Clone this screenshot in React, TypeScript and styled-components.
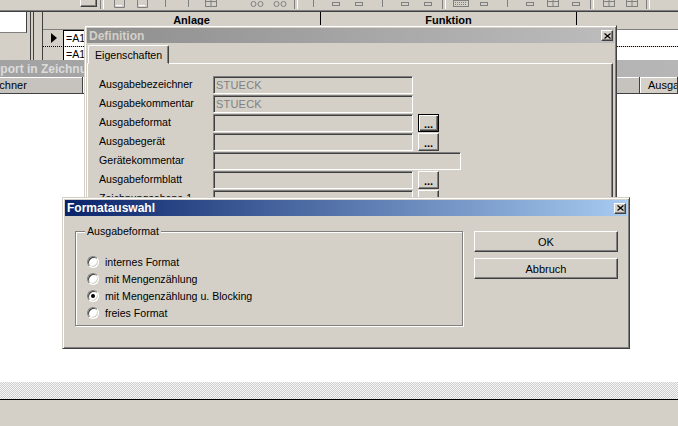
import React from 'react';
import styled, { createGlobalStyle, css } from 'styled-components';

const face = '#d4d0c8';

const GlobalStyle = createGlobalStyle`
  html, body {
    margin: 0;
    padding: 0;
    background: ${face};
  }
  body {
    font-family: "Liberation Sans", Arial, sans-serif;
    font-size: 10.6px;
    color: #000;
  }
`;

const raised = css`
  border: 1px solid;
  border-color: #fff #404040 #404040 #fff;
  box-shadow: inset -1px -1px #808080, inset 1px 1px ${face};
`;

const sunken = css`
  border: 1px solid;
  border-color: #808080 #fff #fff #808080;
  box-shadow: inset 1px 1px #404040, inset -1px -1px ${face};
`;

const Screen = styled.div`
  position: relative;
  width: 678px;
  height: 426px;
  overflow: hidden;
  display: flex;
  flex-direction: column;
  background: ${face};
`;

/* ---------- toolbar ---------- */

const Toolbar = styled.div`
  height: 10px;
  flex-shrink: 0;
  display: flex;
  align-items: flex-end;
  overflow: hidden;
  border-bottom: 1px solid #808080;
`;

const ToolCombo = styled.div`
  width: 97px;
  height: 20px;
  display: flex;
  justify-content: flex-end;
  margin-bottom: 1px;
`;

const DropButton = styled.div`
  width: 17px;
  height: 18px;
  box-sizing: border-box;
  ${raised};
`;

const ToolSep = styled.div`
  width: 2px;
  height: 14px;
  margin: 0 3px 1px;
  border-left: 1px solid #808080;
  border-right: 1px solid #fff;
`;

const ToolSlot = styled.div`
  width: 23px;
  height: 16px;
  display: flex;
  justify-content: center;
  margin-bottom: 1px;
`;

type Glyph = 'page' | 'frame' | 'bino' | 'tick' | 'kbd' | 'dash' | 'none';

const ToolGlyph = ({ glyph }: { glyph: Glyph }) => {
  const c = '#808080';
  switch (glyph) {
    case 'page':
      return (
        <svg width="16" height="16">
          <path d="M3.5 0.5h7l3 3v11h-10z" fill="none" stroke={c} />
          <path d="M5 12.5h6" stroke="#fff" />
        </svg>
      );
    case 'frame':
      return (
        <svg width="16" height="16">
          <rect x="2.5" y="2.5" width="11" height="11" fill="none" stroke={c} />
          <path d="M8 3v10M3 8.5h10" stroke={c} />
        </svg>
      );
    case 'bino':
      return (
        <svg width="16" height="16">
          <circle cx="4.5" cy="11" r="2.5" fill="none" stroke={c} />
          <circle cx="11.5" cy="11" r="2.5" fill="none" stroke={c} />
        </svg>
      );
    case 'tick':
      return (
        <svg width="16" height="16">
          <path d="M8.5 4v10" stroke={c} />
        </svg>
      );
    case 'kbd':
      return (
        <svg width="16" height="16">
          <rect x="0.5" y="7.5" width="15" height="6" fill="none" stroke={c} />
          <path d="M2 9.5h12M2 11.5h12" stroke={c} strokeDasharray="1 1" />
        </svg>
      );
    case 'dash':
      return (
        <svg width="16" height="16">
          <rect x="4.5" y="9.5" width="7" height="3" fill="none" stroke={c} />
        </svg>
      );
    default:
      return null;
  }
};

type ToolItem = Glyph | 'sep';

const toolItems: ToolItem[] = [
  'sep', 'page', 'page', 'tick', 'tick', 'frame', 'none', 'bino', 'bino', 'sep',
  'tick', 'dash', 'dash', 'tick', 'dash', 'dash', 'sep',
  'kbd', 'dash', 'tick', 'dash', 'frame', 'dash', 'sep', 'frame', 'frame', 'sep',
];

/* ---------- data grid behind ---------- */

const GridArea = styled.div`
  height: 49px;
  flex-shrink: 0;
  box-sizing: border-box;
  display: flex;
  border-top: 1px solid #404040;
`;

const TreePane = styled.div`
  width: 27px;
  display: flex;
  flex-direction: column;
`;

const TreeBox = styled.div`
  height: 20px;
  background: #fff;
  border-right: 1px solid #404040;
  border-bottom: 1px solid #808080;
`;

const Splitter = styled.div`
  width: 2px;
  margin: 0 8px 0 3px;
  border-left: 1px solid #404040;
  border-right: 1px solid #404040;
`;

const DataGrid = styled.div`
  flex: 1;
  display: flex;
  flex-direction: column;
  border-left: 1px solid #404040;
`;

const GridHeader = styled.div`
  height: 17px;
  display: flex;
  border-bottom: 1px solid #808080;
`;

const HeadCell = styled.div<{ $w?: number; $plain?: boolean }>`
  ${p => (p.$w ? `width: ${p.$w}px; flex-shrink: 0;` : 'flex: 1;')}
  box-sizing: border-box;
  border-right: ${p => (p.$plain ? 'none' : '1px solid #000')};
  font-family: "Liberation Sans", Arial, sans-serif;
  font-size: 11px;
  font-weight: bold;
  line-height: 17px;
  text-align: center;
`;

const GridRow = styled.div<{ $focused?: boolean }>`
  height: 16px;
  display: flex;
  border-bottom: 1px ${p => (p.$focused ? 'dotted #000' : 'solid #fff')};
  &:last-child {
    flex: 1;
    border-bottom: none;
  }
`;

const Indicator = styled.div`
  width: 20px;
  flex-shrink: 0;
  background: ${face};
  display: flex;
  align-items: center;
  justify-content: center;
  padding-left: 2px;
  box-sizing: border-box;
`;

const DataCell = styled.div<{ $w?: number; $active?: boolean; $plain?: boolean }>`
  ${p => (p.$w ? `width: ${p.$w}px; flex-shrink: 0;` : 'flex: 1;')}
  box-sizing: border-box;
  background: #fff;
  border-left: ${p => (p.$plain ? 'none' : '1px solid #000')};
  ${p => p.$active && 'border-top: 1px solid #000;'}
  padding-left: 2px;
  line-height: 15px;
  white-space: nowrap;
  overflow: hidden;
`;

/* ---------- report window behind ---------- */

const ReportWindow = styled.div`
  flex: 1;
  display: flex;
  flex-direction: column;
  background: #fff;
  overflow: hidden;
`;

const InactiveBar = styled.div`
  height: 17px;
  flex-shrink: 0;
  display: flex;
  align-items: center;
  background: linear-gradient(to right, #a2a2a2, #b6b6b6);
  color: #dcdcdc;
  font-size: 12px;
  font-weight: bold;
  white-space: nowrap;
`;

const ReportTitle = styled.span`
  margin-left: -15px;
`;

const ListHeader = styled.div`
  height: 17px;
  flex-shrink: 0;
  display: flex;
  border-bottom: 1px solid #fff;
`;

const ListHeadCell = styled.div<{ $w?: number; $shift?: number; $shade?: boolean; $pad?: number }>`
  ${p => (p.$w ? `width: ${p.$w}px; flex-shrink: 0;` : 'flex: 1;')}
  margin-left: ${p => p.$shift ?? 0}px;
  box-sizing: border-box;
  background: ${p => (p.$shade ? '#c6c3be' : face)};
  border-right: 1px solid #404040;
  border-bottom: 1px solid #404040;
  box-shadow: inset 1px 1px #fff;
  padding-left: ${p => p.$pad ?? 4}px;
  line-height: 16px;
  font-size: 11px;
  white-space: nowrap;
  overflow: hidden;
`;

const Dither = styled.div`
  height: 17px;
  flex-shrink: 0;
  background-color: #fff;
  background-image: repeating-conic-gradient(#cdcdcd 0 25%, #f7f7f7 0 50%);
  background-size: 2px 2px;
`;

const StatusBar = styled.div`
  height: 27px;
  flex-shrink: 0;
  box-sizing: border-box;
  border-top: 1px solid #000;
  background: ${face};
`;

/* ---------- dialog windows ---------- */

const Win = styled.div<{ $x: number; $y: number; $w: number; $h: number }>`
  position: absolute;
  left: ${p => p.$x}px;
  top: ${p => p.$y}px;
  width: ${p => p.$w}px;
  height: ${p => p.$h}px;
  box-sizing: border-box;
  padding: 2px;
  background: ${face};
  border: 1px solid;
  border-color: ${face} #404040 #404040 ${face};
  box-shadow: inset 1px 1px #fff, inset -1px -1px #808080;
  display: flex;
  flex-direction: column;
`;

const Caption = styled.div<{ $active?: boolean }>`
  height: ${p => (p.$active ? 16 : 15)}px;
  flex-shrink: 0;
  display: flex;
  align-items: center;
  justify-content: space-between;
  padding: 0 1px 0 2px;
  background: ${p =>
    p.$active
      ? 'linear-gradient(to right, #0a246a, #a6caf0)'
      : 'linear-gradient(to right, #8e8e8e, #bdbcbd)'};
  color: ${p => (p.$active ? '#fff' : '#d4d0c8')};
  font-size: 12px;
  font-weight: bold;
`;

const CloseBox = styled.div`
  width: 12px;
  height: 11px;
  box-sizing: border-box;
  background: ${face};
  ${raised};
  display: flex;
  align-items: center;
  justify-content: center;
`;

const CloseGlyph = () => (
  <svg width="7" height="6" viewBox="0 0 7 6">
    <path d="M0.5 0.5l6 5M6.5 0.5l-6 5" stroke="#000" strokeWidth="1.2" />
  </svg>
);

const TabStrip = styled.div`
  display: flex;
  margin-top: 2px;
  padding-left: 1px;
  position: relative;
  z-index: 1;
`;

const Tab = styled.div`
  height: 19px;
  box-sizing: border-box;
  padding: 0 6px;
  display: flex;
  align-items: center;
  background: ${face};
  border: 1px solid;
  border-color: #fff #404040 ${face} #fff;
  border-radius: 2px 2px 0 0;
  box-shadow: inset -1px 0 #808080;
  margin-bottom: -1px;
`;

const TabPanel = styled.div`
  flex: 1;
  margin: 0 1px 1px 0;
  padding: 12px 10px 0 11px;
  border: 1px solid;
  border-color: #fff #404040 #404040 #fff;
  box-shadow: inset -1px -1px #808080;
  display: flex;
  flex-direction: column;
  gap: 1px;
`;

const FieldRow = styled.div`
  height: 18px;
  display: flex;
  align-items: center;
`;

const FieldLabel = styled.span`
  width: 114px;
  flex-shrink: 0;
  white-space: nowrap;
  margin-top: -2px;
`;

const TextBox = styled.div<{ $w: number }>`
  width: ${p => p.$w}px;
  height: 18px;
  box-sizing: border-box;
  ${sunken};
  background: ${face};
  color: #808080;
  padding-left: 2px;
  line-height: 16px;
  font-size: 11px;
  letter-spacing: 0.2px;
`;

const DotsButton = styled.div<{ $default?: boolean }>`
  width: 21px;
  height: 18px;
  margin-left: 5px;
  box-sizing: border-box;
  background: ${face};
  display: flex;
  align-items: flex-end;
  justify-content: center;
  padding-bottom: 3px;
  font-weight: bold;
  font-size: 11px;
  line-height: 8px;
  ${p =>
    p.$default
      ? css`
          border: 1px solid #000;
          box-shadow: inset 1px 1px #fff, inset -1px -1px #404040, inset -2px -2px #808080;
        `
      : raised}
`;

const DialogBody = styled.div`
  display: flex;
  align-items: flex-start;
  gap: 11px;
  padding: 9px 8px 0 10px;
`;

const GroupBox = styled.fieldset`
  width: 388px;
  min-width: 0;
  box-sizing: border-box;
  margin: 0;
  padding: 15px 10px 4px 11px;
  border: 1px solid #808080;
  box-shadow: inset 1px 1px #fff, 1px 1px #fff;
`;

const GroupLegend = styled.legend`
  padding: 0 2px;
  margin-left: -2px;
  line-height: 13px;
  background: ${face};
`;

const RadioRow = styled.label`
  height: 17px;
  display: flex;
  align-items: center;
  gap: 6px;
`;

const RadioDot = styled.span<{ $checked?: boolean }>`
  position: relative;
  width: 12px;
  height: 12px;
  box-sizing: border-box;
  border-radius: 50%;
  background: #fff;
  border: 1px solid;
  border-color: #808080 #fff #fff #808080;
  box-shadow: inset 1px 1px #404040, inset -1px -1px ${face};
  &::after {
    content: '';
    display: ${p => (p.$checked ? 'block' : 'none')};
    position: absolute;
    left: 3px;
    top: 3px;
    width: 4px;
    height: 4px;
    border-radius: 50%;
    background: #000;
  }
`;

const ButtonColumn = styled.div`
  display: flex;
  flex-direction: column;
  gap: 6px;
  margin-top: 6px;
`;

const PushButton = styled.div`
  width: 144px;
  height: 21px;
  box-sizing: border-box;
  background: ${face};
  ${raised};
  display: flex;
  align-items: center;
  justify-content: center;
  font-size: 11px;
`;

const fields: { label: string; value?: string; width: number; dots?: boolean; isDefault?: boolean }[] = [
  { label: 'Ausgabebezeichner', value: 'STUECK', width: 200 },
  { label: 'Ausgabekommentar', value: 'STUECK', width: 200 },
  { label: 'Ausgabeformat', width: 200, dots: true, isDefault: true },
  { label: 'Ausgabegerät', width: 200, dots: true },
  { label: 'Gerätekommentar', width: 248 },
  { label: 'Ausgabeformblatt', width: 200, dots: true },
  { label: 'Zeichnungsebene 1', width: 200, dots: true },
  { label: 'Zeichnungsebene 2', width: 200, dots: true },
];

const formats = [
  { label: 'internes Format' },
  { label: 'mit Mengenzählung' },
  { label: 'mit Mengenzählung u. Blocking', checked: true },
  { label: 'freies Format' },
];

export default function App() {
  return (
    <>
      <GlobalStyle />
      <Screen>
        <Toolbar>
          <ToolCombo>
            <DropButton />
          </ToolCombo>
          {toolItems.map((item, i) =>
            item === 'sep' ? (
              <ToolSep key={i} />
            ) : (
              <ToolSlot key={i}>
                <ToolGlyph glyph={item} />
              </ToolSlot>
            )
          )}
        </Toolbar>

        <GridArea>
          <TreePane>
            <TreeBox />
          </TreePane>
          <Splitter />
          <DataGrid>
            <GridHeader>
              <HeadCell $w={20} $plain />
              <HeadCell $w={258}>Anlage</HeadCell>
              <HeadCell $w={256}>Funktion</HeadCell>
              <HeadCell $plain />
            </GridHeader>
            <GridRow $focused>
              <Indicator>
                <svg width="6" height="10">
                  <path d="M0 0l6 5-6 5z" fill="#000" />
                </svg>
              </Indicator>
              <DataCell $w={258} $active>=A1</DataCell>
              <DataCell $w={256}>=F1</DataCell>
              <DataCell $plain />
            </GridRow>
            <GridRow>
              <Indicator />
              <DataCell $w={258}>=A1</DataCell>
              <DataCell $w={256}>=F2</DataCell>
              <DataCell $plain />
            </GridRow>
          </DataGrid>
        </GridArea>

        <ReportWindow>
          <InactiveBar>
            <ReportTitle>Report in Zeichnung</ReportTitle>
          </InactiveBar>
          <ListHeader>
            <ListHeadCell $w={103} $shift={-20} $shade>
              Zeichner
            </ListHeadCell>
            <ListHeadCell $shade />
            <ListHeadCell $w={38} $pad={8}>
              Ausgabe
            </ListHeadCell>
          </ListHeader>
        </ReportWindow>
        <Dither />
        <StatusBar />

        <Win $x={84} $y={25} $w={533} $h={300}>
          <Caption>
            <span>Definition</span>
            <CloseBox>
              <CloseGlyph />
            </CloseBox>
          </Caption>
          <TabStrip>
            <Tab>Eigenschaften</Tab>
          </TabStrip>
          <TabPanel>
            {fields.map(f => (
              <FieldRow key={f.label}>
                <FieldLabel>{f.label}</FieldLabel>
                <TextBox $w={f.width}>{f.value}</TextBox>
                {f.dots && <DotsButton $default={f.isDefault}>...</DotsButton>}
              </FieldRow>
            ))}
          </TabPanel>
        </Win>

        <Win $x={62} $y={197} $w={568} $h={152}>
          <Caption $active>
            <span>Formatauswahl</span>
            <CloseBox>
              <CloseGlyph />
            </CloseBox>
          </Caption>
          <DialogBody>
            <GroupBox>
              <GroupLegend>Ausgabeformat</GroupLegend>
              {formats.map(f => (
                <RadioRow key={f.label}>
                  <RadioDot $checked={f.checked} />
                  <span>{f.label}</span>
                </RadioRow>
              ))}
            </GroupBox>
            <ButtonColumn>
              <PushButton>OK</PushButton>
              <PushButton>Abbruch</PushButton>
            </ButtonColumn>
          </DialogBody>
        </Win>
      </Screen>
    </>
  );
}
